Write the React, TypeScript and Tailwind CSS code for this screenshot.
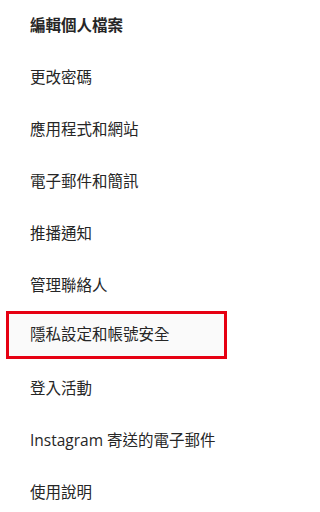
import React from 'react';

const items = [
  '編輯個人檔案',
  '更改密碼',
  '應用程式和網站',
  '電子郵件和簡訊',
  '推播通知',
  '管理聯絡人',
  '隱私設定和帳號安全',
  '登入活動',
  'Instagram 寄送的電子郵件',
  '使用說明',
];

export default function App() {
  return (
    <div
      className="w-[233px] h-[512px] overflow-hidden bg-white text-[#262626] text-[15.5px] leading-none"
      style={{ fontFamily: '"Segoe UI", "Open Sans", "Noto Sans CJK TC", sans-serif' }}
    >
      {items.map((label, i) => {
        if (i === 6) {
          // highlighted row with red outline
          return (
            <div key={label} className="h-[52px]">
              <div className="-mt-px mx-[6px] h-[48px] border-[3px] border-[#e60012] bg-[#fafafa] flex items-center pl-[21px]">
                {label}
              </div>
            </div>
          );
        }
        return (
          <div
            key={label}
            className={`h-[52px] flex items-center pl-[30px] ${i === 0 ? 'font-semibold' : ''}`}
          >
            {label}
          </div>
        );
      })}
    </div>
  );
}
